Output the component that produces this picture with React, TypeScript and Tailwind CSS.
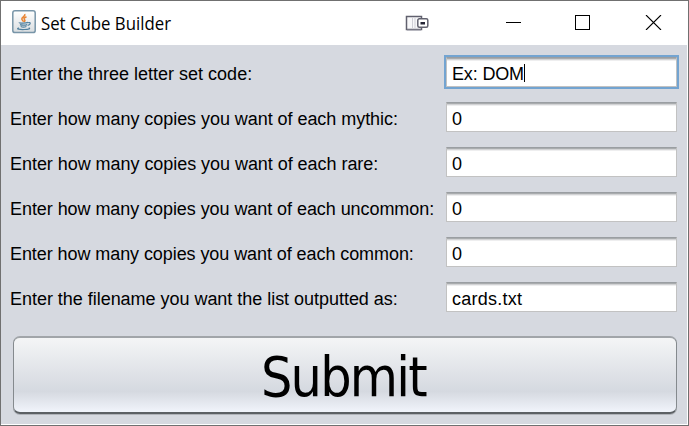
import React from "react";

const rows = [
  { label: "Enter the three letter set code:", value: "Ex: DOM", tracking: "tracking-normal", valueTracking: "tracking-[-0.15px]", focused: true },
  { label: "Enter how many copies you want of each mythic:", value: "0", tracking: "tracking-[-0.05px]", valueTracking: "" },
  { label: "Enter how many copies you want of each rare:", value: "0", tracking: "tracking-[-0.045px]", valueTracking: "" },
  { label: "Enter how many copies you want of each uncommon:", value: "0", tracking: "tracking-[-0.065px]", valueTracking: "" },
  { label: "Enter how many copies you want of each common:", value: "0", tracking: "tracking-[-0.075px]", valueTracking: "" },
  { label: "Enter the filename you want the list outputted as:", value: "cards.txt", tracking: "tracking-[-0.03px]", valueTracking: "tracking-[0.25px]" },
];

function JavaIcon() {
  return (
    <svg width="24" height="24" viewBox="0 0 24 24" fill="none">
      <defs>
        <linearGradient id="tile" x1="0" y1="0" x2="0" y2="1">
          <stop offset="0" stopColor="#fff" />
          <stop offset="1" stopColor="#d9dde0" />
        </linearGradient>
      </defs>
      <rect x="0.8" y="0.8" width="22.4" height="21.8" rx="2.2" fill="url(#tile)" stroke="#7895a8" strokeWidth="1.5" />
      <path d="M12.8 4c1.2 2.3-3.5 3.2-3 5.2.2 1 1.4 1.6 1.7 2.5M14.5 6.8c-3 1.2-2.8 2-1.8 3.2.5.7.1 1.3-.6 1.8" stroke="#e88432" strokeWidth="1.5" />
      <path d="M7.5 12.5c-1.8.7 6.5 1 8.5-.1M8 14.6c1.5.8 5.5.7 7.2 0M8.7 16.5c1.4.7 4.3.6 5.7 0M16 12.7c3-.9 3 2-.3 2.7M6.8 17.8c-3.5 1.2 1.2 1.9 5.7 1.7 3.8 0 6.7-.7 4.2-1.7" stroke="#51809e" strokeWidth="1.2" />
    </svg>
  );
}

function DeviceIcon() {
  return (
    <svg width="24" height="17" viewBox="0 0 24 17" fill="none">
      <rect x="1.5" y="1.5" width="15" height="13" fill="#f8f8fa" stroke="#60606e" strokeWidth="1.5" />
      <path d="M7.5 3v10M10 3v10" stroke="#cfcfd6" />
      <path d="M2 15.2h14" stroke="#aaaab4" />
      <rect x="12.8" y="3.8" width="10" height="8.5" rx="1.5" fill="#fff" stroke="#62626f" strokeWidth="1.5" />
      <rect x="15.5" y="7" width="4.5" height="2.5" fill="#252535" />
    </svg>
  );
}

export default function App() {
  return (
    <div className="flex h-[426px] w-[689px] flex-col border border-[#707070] bg-white font-['Liberation_Sans',sans-serif] text-black">
      <header className="flex h-[44px] shrink-0 items-start">
        <div className="ml-[11px] mt-[9px]"><JavaIcon /></div>
        <h1 className="ml-[5px] mt-[9px] w-[131px]">
          <svg width="131" height="26" className="block overflow-visible">
            <text y="20" fontSize="18" fontFamily="'Open Sans', 'Noto Sans', sans-serif" textLength="130" lengthAdjust="spacingAndGlyphs">Set Cube Builder</text>
          </svg>
        </h1>
        <div className="ml-[233px] mt-[14px]"><DeviceIcon /></div>
        <svg className="ml-[77px] mt-[14px]" width="156" height="15" viewBox="0 0 156 15" fill="none" stroke="#000">
          <path d="M0 7.5h15M69.5.5h14v14h-14z" shapeRendering="crispEdges" />
          <path d="M140 0l15 15M155 0l-15 15" strokeWidth="1.1" />
        </svg>
      </header>
      <main className="mb-px mr-px flex flex-1 flex-col bg-[#d6d9e0]">
        <div className="flex flex-col gap-[15px] pt-[12px]">
          {rows.map((row) => (
            <div key={row.label} className="flex h-[30px] items-center justify-between pl-[9px] pr-[10px]">
              <label className={`${row.tracking} whitespace-nowrap pt-[3px] text-[18px] leading-[28px]`}>{row.label}</label>
              <div className={`flex h-[30px] w-[231px] items-center border border-[#c2c2c2] border-t-[#9a9ea2] bg-white pl-[5px] text-[18px] leading-[28px] shadow-[inset_0_1px_0_#a9acae,inset_0_2px_0_#d2d3d5,inset_0_3px_0_#eeeeef] ${row.focused ? "outline-2 outline-[#73a4d1]" : ""}`}>
                <span className={`pt-[3px] ${row.valueTracking}`}>{row.value}</span>
                {row.focused && <i className="mt-px h-[18px] w-px bg-black" />}
              </div>
            </div>
          ))}
        </div>
        <button className="ml-[12px] mt-[24px] flex h-[78px] w-[664px] items-start rounded-[7px] border-x border-y-2 border-x-[#858a8e] border-t-[#a1a5a9] border-b-[#5c6064] bg-linear-to-b from-[#f4f5f6] via-[#d5d9e0] via-[72%] to-[#f1f4fb] pl-[247px] shadow-[0_1px_0_#b0b3b9]">
          <span className="mt-[7px] font-['DejaVu_Sans_Condensed','DejaVu_Sans',sans-serif] text-[55px] leading-[64px] tracking-[-1.8px] [font-stretch:condensed]">Submit</span>
        </button>
      </main>
    </div>
  );
}
